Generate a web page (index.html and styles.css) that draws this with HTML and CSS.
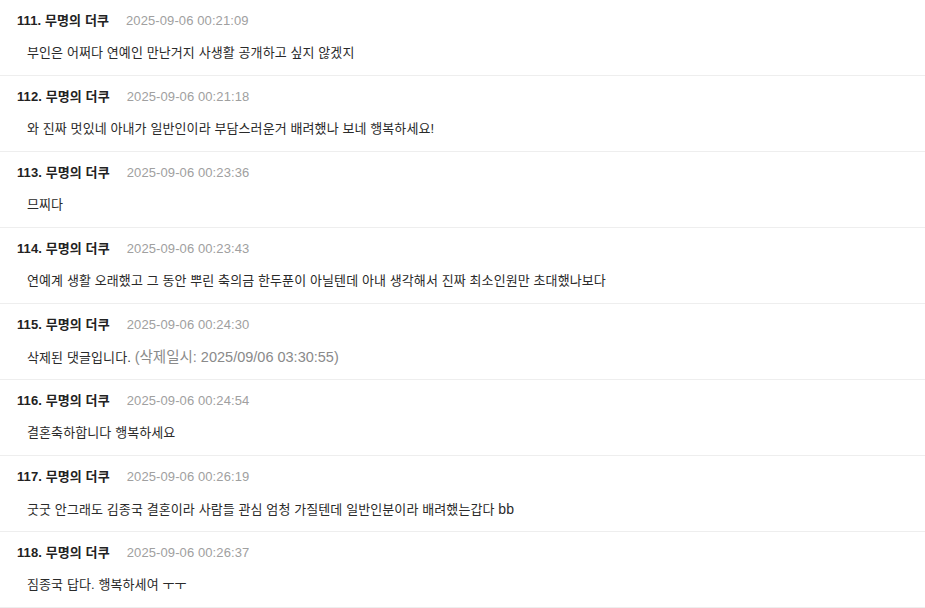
FILE: index.html
```html
<!DOCTYPE html>
<html lang="ko">
<head>
<meta charset="utf-8">
<link rel="stylesheet" href="styles.css">
</head>
<body>
<ul class="comments">
  <li class="comment">
    <div class="comment-head"><span class="num">111.</span> <span class="nick">무명의 더쿠</span><span class="date">2025-09-06 00:21:09</span></div>
    <div class="comment-body">부인은 어쩌다 연예인 만난거지 사생활 공개하고 싶지 않겠지</div>
  </li>
  <li class="comment">
    <div class="comment-head"><span class="num">112.</span> <span class="nick">무명의 더쿠</span><span class="date">2025-09-06 00:21:18</span></div>
    <div class="comment-body">와 진짜 멋있네 아내가 일반인이라 부담스러운거 배려했나 보네 행복하세요!</div>
  </li>
  <li class="comment">
    <div class="comment-head"><span class="num">113.</span> <span class="nick">무명의 더쿠</span><span class="date">2025-09-06 00:23:36</span></div>
    <div class="comment-body">므찌다</div>
  </li>
  <li class="comment">
    <div class="comment-head"><span class="num">114.</span> <span class="nick">무명의 더쿠</span><span class="date">2025-09-06 00:23:43</span></div>
    <div class="comment-body">연예계 생활 오래했고 그 동안 뿌린 축의금 한두푼이 아닐텐데 아내 생각해서 진짜 최소인원만 초대했나보다</div>
  </li>
  <li class="comment">
    <div class="comment-head"><span class="num">115.</span> <span class="nick">무명의 더쿠</span><span class="date">2025-09-06 00:24:30</span></div>
    <div class="comment-body">삭제된 댓글입니다. <span class="deleted">(삭제일시: 2025/09/06 03:30:55)</span></div>
  </li>
  <li class="comment">
    <div class="comment-head"><span class="num">116.</span> <span class="nick">무명의 더쿠</span><span class="date">2025-09-06 00:24:54</span></div>
    <div class="comment-body">결혼축하합니다 행복하세요</div>
  </li>
  <li class="comment">
    <div class="comment-head"><span class="num">117.</span> <span class="nick">무명의 더쿠</span><span class="date">2025-09-06 00:26:19</span></div>
    <div class="comment-body">굿굿 안그래도 김종국 결혼이라 사람들 관심 엄청 가질텐데 일반인분이라 배려했는갑다 <span class="latin">bb</span></div>
  </li>
  <li class="comment">
    <div class="comment-head"><span class="num">118.</span> <span class="nick">무명의 더쿠</span><span class="date">2025-09-06 00:26:37</span></div>
    <div class="comment-body">짐종국 답다. 행복하세여 ㅜㅜ</div>
  </li>
</ul>
</body>
</html>
```
FILE: styles.css
```css
html, body {
  margin: 0;
  padding: 0;
  background: #ffffff;
}
body {
  font-family: "Liberation Sans", "Noto Sans CJK KR", sans-serif;
  color: #333333;
}
.comments {
  list-style: none;
  margin: 0;
  padding: 0;
}
.comment {
  height: 75px;
  box-sizing: content-box;
  border-bottom: 1px solid #eeeeee;
  padding: 0 0 0 17px;
  display: flex;
  flex-direction: column;
}
.comment-head {
  margin-top: 12px;
  height: 18px;
  line-height: 18px;
  font-size: 13px;
  font-weight: bold;
  color: #222222;
  letter-spacing: 0.1px;
  white-space: nowrap;
}
.date {
  margin-left: 17px;
  font-size: 13px;
  font-weight: normal;
  color: #a0a0a0;
  letter-spacing: 0.1px;
}
.comment-body {
  margin-top: 13px;
  padding-left: 10px;
  height: 20px;
  line-height: 20px;
  font-size: 13px;
  letter-spacing: 0.1px;
  color: #2a2a2a;
  white-space: nowrap;
}
.deleted {
  color: #8a8a8a;
  font-size: 14.5px;
  letter-spacing: 0;
}
.latin {
  font-size: 14px;
}
```
